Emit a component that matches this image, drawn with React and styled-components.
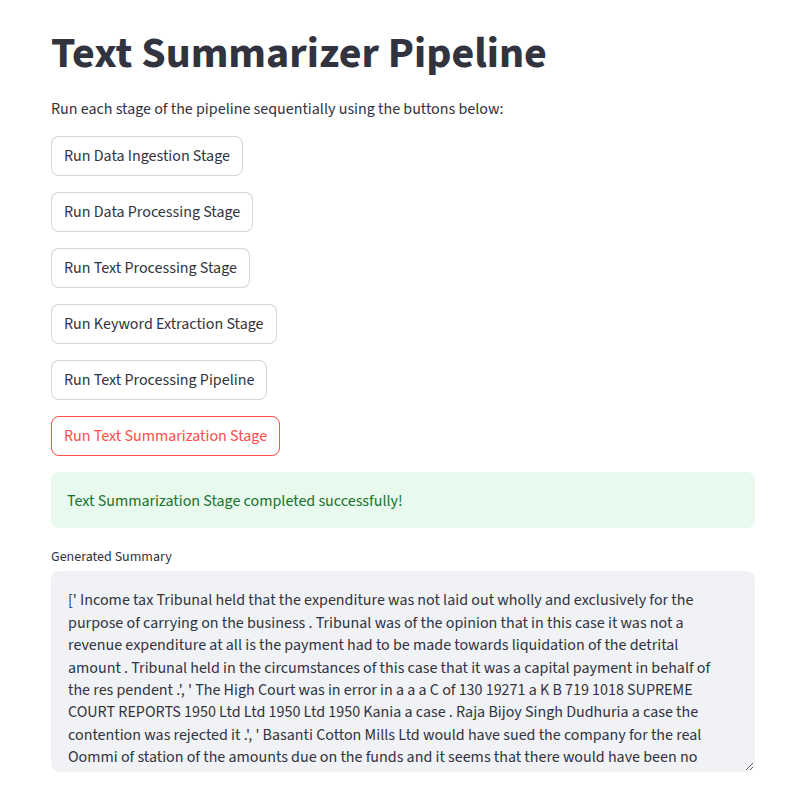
import React from "react";
import styled, { createGlobalStyle } from "styled-components";

const Global = createGlobalStyle`
  html, body { margin: 0; padding: 0; background: #ffffff; }
  body {
    font-family: "Source Sans 3", "Source Sans Pro", "Noto Sans", sans-serif;
    color: #31333f;
    -webkit-font-smoothing: antialiased;
  }
  * { box-sizing: border-box; }
`;

const Main = styled.main`
  width: 793px;
  padding: 28px 38px 0 51px;
`;

const Block = styled.div`
  display: flex;
  flex-direction: column;
  align-items: flex-start;
  gap: 16px;
  width: 704px;
`;

const Title = styled.h1`
  margin: 0;
  font-size: 44px;
  font-weight: 700;
  line-height: 1.2;
  color: #31333f;
`;

const Paragraph = styled.p`
  margin: 0 0 -2px;
  font-size: 16px;
  line-height: 1.6;
`;

const StageButton = styled.button`
  display: inline-flex;
  align-items: center;
  justify-content: center;
  height: 40px;
  padding: 1px 12px 0;
  font-family: inherit;
  font-size: 16px;
  line-height: 1.6;
  background: #ffffff;
  color: ${(p) => (p.$active ? "#ff4b4b" : "#31333f")};
  border: 1px solid ${(p) => (p.$active ? "#ff4b4b" : "rgba(49, 51, 63, 0.2)")};
  border-radius: 8px;
  cursor: pointer;
`;

const Alert = styled.div`
  width: 100%;
  padding: 17px 16px 15px;
  border-radius: 8px;
  background: rgba(33, 195, 84, 0.1);
  color: rgb(23, 114, 51);
  font-size: 16px;
  line-height: 24px;
`;

const Field = styled.div`
  display: flex;
  flex-direction: column;
  width: 100%;
`;

const Label = styled.label`
  display: flex;
  align-items: center;
  min-height: 24px;
  padding-top: 1px;
  margin-bottom: 3px;
  font-size: 14px;
  line-height: 1.6;
  color: #31333f;
`;

const Summary = styled.textarea`
  display: block;
  width: 100%;
  height: 201px;
  padding: 17px 30px 16px 16px;
  margin: 0;
  border: 1px solid #f0f2f6;
  border-radius: 8px;
  background: #f0f2f6;
  color: #31333f;
  font-family: inherit;
  font-size: 16px;
  line-height: 1.4;
  overflow: hidden;
  resize: vertical;
  outline: none;
`;

const stages = [
  "Run Data Ingestion Stage",
  "Run Data Processing Stage",
  "Run Text Processing Stage",
  "Run Keyword Extraction Stage",
  "Run Text Processing Pipeline",
  "Run Text Summarization Stage",
];

const summary =
  "[' Income tax Tribunal held that the expenditure was not laid out wholly and exclusively for the purpose of carrying on the business . Tribunal was of the opinion that in this case it was not a revenue expenditure at all is the payment had to be made towards liquidation of the detrital amount . Tribunal held in the circumstances of this case that it was a capital payment in behalf of the res pendent .', ' The High Court was in error in a a a C of 130 19271 a K B 719 1018 SUPREME COURT REPORTS 1950 Ltd Ltd 1950 Ltd 1950 Kania a case . Raja Bijoy Singh Dudhuria a case the contention was rejected it .', ' Basanti Cotton Mills Ltd would have sued the company for the real Oommi of station of the amounts due on the funds and it seems that there would have been no";

export default function App() {
  return (
    <>
      <Global />
      <Main>
        <Block>
          <Title>Text Summarizer Pipeline</Title>
          <Paragraph>Run each stage of the pipeline sequentially using the buttons below:</Paragraph>
          {stages.map((s, i) => (
            <StageButton key={s} $active={i === stages.length - 1}>
              {s}
            </StageButton>
          ))}
          <Alert>Text Summarization Stage completed successfully!</Alert>
          <Field>
            <Label htmlFor="summary">Generated Summary</Label>
            <Summary id="summary" readOnly value={summary} />
          </Field>
        </Block>
      </Main>
    </>
  );
}
